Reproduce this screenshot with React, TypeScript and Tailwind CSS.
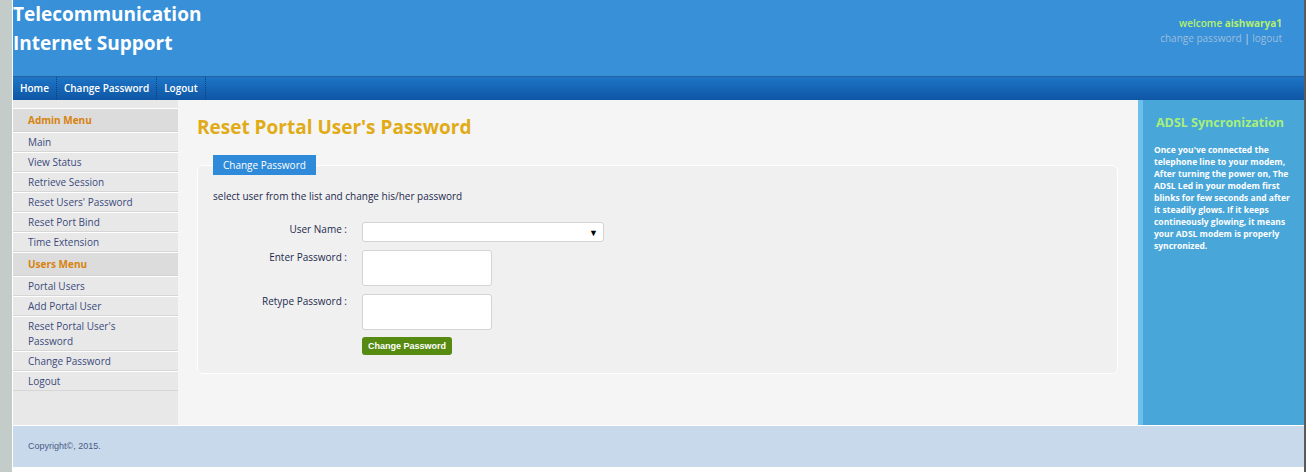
import React from 'react';

// Sidebar menu groups
const adminMenu = ['Main', 'View Status', 'Retrieve Session', "Reset Users' Password", 'Reset Port Bind', 'Time Extension'];
const usersMenu = ['Portal Users', 'Add Portal User', "Reset Portal User's Password", 'Change Password', 'Logout'];

const font = { fontFamily: '"Open Sans", "Liberation Sans", sans-serif' };

const MenuHeader: React.FC<{ title: string }> = ({ title }) => (
  <div className="h-[24px] bg-[#dcdcdc] border-t border-white border-b border-b-[#d2d2d2] pl-[15px] flex items-center text-[10px] font-bold text-[#d7830e]">
    {title}
  </div>
);

const MenuItem: React.FC<{ label: string }> = ({ label }) => (
  <div className="border-t border-white border-b border-b-[#d6d6d6] pl-[15px] pr-[28px] pt-[2px] pb-[1px] text-[10px] leading-[15px] text-[#3b4a7c]">
    {label}
  </div>
);

export default function App() {
  return (
    <div className="flex min-h-[472px] bg-[#c3ccc8]" style={font}>
      {/* left textured strip */}
      <div className="w-[12px] shrink-0" />
      <div className="w-[1292px] shrink-0 bg-white border-l border-white flex flex-col">
        {/* Header */}
        <div className="h-[76px] bg-[#3790d8] flex justify-between">
          <div className="pl-0 text-white font-bold text-[19px] leading-[29px]">
            <div>Telecommunication</div>
            <div>Internet Support</div>
          </div>
          <div className="pr-[22px] pt-[16px] text-right text-[10px] leading-[15px] font-semibold">
            <div className="text-[#b4f06c]">
              welcome <span className="font-bold">aishwarya1</span>
            </div>
            <div className="text-[#9dbfdd] font-normal">
              change password <span className="text-[#c9d9e6]">|</span> logout
            </div>
          </div>
        </div>
        <div className="h-[1px] bg-[#22639f]" />
        {/* Nav */}
        <div className="h-[23px] bg-gradient-to-b from-[#1e75c6] to-[#0e56a5] flex items-center text-white text-[10px] font-semibold">
          {['Home', 'Change Password', 'Logout'].map((item) => (
            <div key={item} className="px-[7px] h-full flex items-center border-r border-dotted border-[#0a3f78]">
              {item}
            </div>
          ))}
        </div>
        {/* Body */}
        <div className="flex h-[325px]">
          {/* Left menu */}
          <div className="w-[165px] shrink-0 bg-[#e8e8e8] pt-[8px]">
            <MenuHeader title="Admin Menu" />
            {adminMenu.map((m) => (
              <MenuItem key={m} label={m} />
            ))}
            <MenuHeader title="Users Menu" />
            {usersMenu.map((m) => (
              <MenuItem key={m} label={m} />
            ))}
          </div>
          {/* Main content */}
          <div className="w-[960px] shrink-0 bg-[#f5f5f5] pl-[19px] pr-[20px]">
            <h1 className="text-[19px] font-bold text-[#e1ab17] mt-[14px] leading-[26px]">Reset Portal User's Password</h1>
            <fieldset className="mt-[15px] border border-white rounded-[6px] bg-[#f0f0f0] pl-[15px] pb-[18px]">
              <legend className="ml-0 bg-[#2f8bd9] text-white text-[10px] leading-[20px] px-[10px]">Change Password</legend>
              <div className="mt-[14px] text-[10px] text-[#1d2a4e] leading-[15px]">select user from the list and change his/her password</div>
              <div className="mt-[18px] grid grid-cols-[134px_1fr] gap-x-[15px] text-[10px] text-[#1d2a4e] leading-[15px]">
                <div className="text-right">User Name :</div>
                <div className="w-[242px] h-[20px] bg-white border border-[#d4d4d4] rounded-[3px] flex items-center justify-end pr-[5px] text-[9px] text-black">
                  ▼
                </div>
                <div className="text-right mt-[8px]">Enter Password :</div>
                <div className="mt-[8px] w-[130px] h-[36px] bg-white border border-[#d4d4d4] rounded-[3px]" />
                <div className="text-right mt-[8px]">Retype Password :</div>
                <div className="mt-[8px] w-[130px] h-[36px] bg-white border border-[#d4d4d4] rounded-[3px]" />
                <div />
                <div className="mt-[7px]">
                  <button
                    className="h-[18px] px-[6px] bg-[#568a10] rounded-[3px] text-white text-[9px] font-bold leading-[18px]"
                    style={{ fontFamily: '"Liberation Sans", sans-serif' }}
                  >
                    Change Password
                  </button>
                </div>
              </div>
            </fieldset>
          </div>
          {/* Right info panel */}
          <div className="flex-1 bg-[#48a6d9] border-l-[5px] border-[#6cc1ec] pl-[11px] pr-[8px]">
            <div className="mt-[15px] pl-[2px] text-[12.5px] font-bold text-[#a6ef7c] leading-[16px]">ADSL Syncronization</div>
            <p className="mt-[13px] text-white text-[8.5px] font-bold leading-[12px] whitespace-nowrap">
              Once you've connected the<br />
              telephone line to your modem,<br />
              After turning the power on, The<br />
              ADSL Led in your modem first<br />
              blinks for few seconds and after<br />
              it steadily glows. If it keeps<br />
              contineously glowing, it means<br />
              your ADSL modem is properly<br />
              syncronized.
            </p>
          </div>
        </div>
        {/* Footer */}
        <div className="h-[42px] bg-[#c8d9eb] border-t border-white flex items-center pl-[15px] text-[9px] text-[#4a5a86]" style={{ fontFamily: '"Liberation Sans", sans-serif' }}>
          Copyright©, 2015.
        </div>
      </div>
      <div className="w-[2px] shrink-0 bg-[#5b5b5b]" />
    </div>
  );
}
